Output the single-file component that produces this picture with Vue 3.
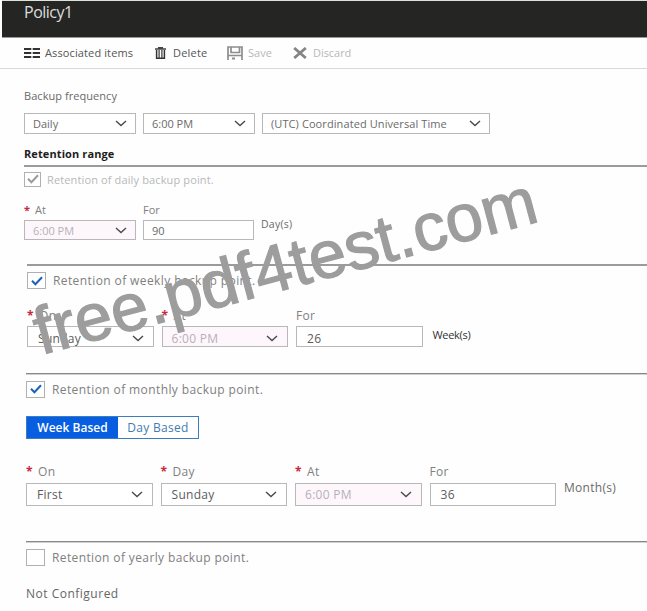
<script setup>
import { h } from 'vue'

const Chevron = () =>
  h('svg', { class: 'chevron', viewBox: '0 0 12 7', width: 12, height: 7 }, [
    h('path', { d: 'M1 1 L6 5.5 L11 1', fill: 'none', stroke: '#4a4a4a', 'stroke-width': 1.4 }),
  ])
const Tick = (props) =>
  h('svg', { viewBox: '0 0 12 10', width: 12, height: 10 }, [
    h('path', { d: 'M1 4.8 L4.4 8.2 L11 1.2', fill: 'none', stroke: props.color, 'stroke-width': 2 }),
  ])
Tick.props = ['color']
</script>

<template>
  <div class="page">
    <header class="title"><span>Policy1</span></header>
    <nav class="toolbar">
      <span class="tool t1">
        <svg width="16" height="10" viewBox="0 0 16 10"><path d="M0 1H7.3M8.7 1H16M0 5H7.3M8.7 5H16M0 9H7.3M8.7 9H16" stroke="#333" stroke-width="1.9" /></svg>
        <span>Associated items</span>
      </span>
      <span class="tool t2">
        <svg width="11" height="12" viewBox="0 0 11 12"><path d="M3.6 1.7V.6H7.4V1.7M0 2H11" fill="none" stroke="#444" stroke-width="1.3" /><path d="M1.6 3V11.3H9.4V3" fill="none" stroke="#333" stroke-width="1.5" /><path d="M4.1 3V11M6.9 3V11" stroke="#444" stroke-width="1.3" /></svg>
        <span>Delete</span>
      </span>
      <span class="tool t3 off">
        <svg width="16" height="14" viewBox="0 0 16 14"><path d="M1 14V1H15V14M4 1V6.5H12.5V1M1 9.5H15" fill="none" stroke="#8d8d8d" stroke-width="1.7" /><path d="M5 11.5H8V13.5H5Z" fill="#8d8d8d" /></svg>
        <span>Save</span>
      </span>
      <span class="tool t4 off">
        <svg width="14" height="12" viewBox="0 0 14 12"><path d="M1.2 1L12.8 11M12.8 1L1.2 11" stroke="#858585" stroke-width="2.8" /></svg>
        <span>Discard</span>
      </span>
    </nav>

    <main>
      <p class="label freq"><span>Backup frequency</span></p>
      <div class="row top">
        <div class="box"><span>Daily</span><Chevron /></div>
        <div class="box"><span>6:00 PM</span><Chevron /></div>
        <div class="box zone"><span>(UTC) Coordinated Universal Time</span><Chevron /></div>
      </div>
      <h2><span>Retention range</span></h2>

      <section class="daily">
        <div class="check"><i><Tick color="#9b9b9b" /></i><span>Retention of daily backup point.</span></div>
        <div class="row">
          <div class="field"><label><b>*</b>At</label><div class="box locked"><span>6:00 PM</span><Chevron /></div></div>
          <div class="field"><label>For</label><div class="box"><span>90</span></div></div>
          <span class="unit">Day(s)</span>
        </div>
      </section>

      <section class="wide weekly">
        <div class="check"><i><Tick color="#1764b5" /></i><span>Retention of weekly backup point.</span></div>
        <div class="row">
          <div class="field"><label><b>*</b>On</label><div class="box"><span>Sunday</span><Chevron /></div></div>
          <div class="field"><label><b>*</b>At</label><div class="box locked"><span>6:00 PM</span><Chevron /></div></div>
          <div class="field"><label>For</label><div class="box"><span>26</span></div></div>
          <span class="unit">Week(s)</span>
        </div>
      </section>

      <section class="wide monthly">
        <div class="check"><i><Tick color="#1764b5" /></i><span>Retention of monthly backup point.</span></div>
        <div class="toggle"><span class="on">Week Based</span><span class="alt">Day Based</span></div>
        <div class="row">
          <div class="field"><label><b>*</b>On</label><div class="box"><span>First</span><Chevron /></div></div>
          <div class="field"><label><b>*</b>Day</label><div class="box"><span>Sunday</span><Chevron /></div></div>
          <div class="field"><label><b>*</b>At</label><div class="box locked"><span>6:00 PM</span><Chevron /></div></div>
          <div class="field"><label>For</label><div class="box"><span>36</span></div></div>
          <span class="unit">Month(s)</span>
        </div>
      </section>

      <section class="wide yearly">
        <div class="check"><i></i><span>Retention of yearly backup point.</span></div>
        <p class="none"><span>Not Configured</span></p>
      </section>
    </main>
    <div class="watermark">free.pdf4test.com</div>
  </div>
</template>

<style>
body { background: #fff; overflow: hidden; }
</style>

<style scoped>
.page { position: relative; width: 647px; height: 611px; overflow: hidden; background: #fefefe; font-family: "Open Sans", "Noto Sans", sans-serif; font-size: 11px; color: #6a6a6a; white-space: nowrap; }
.page :deep(*) { box-sizing: border-box; }
.page :deep(svg) { display: block; flex: none; }
p, h2 { margin: 0; }
.title { height: 38px; margin-left: 2px; padding-left: 22px; background: #252623; border-top: 1px solid #dbe3db; border-bottom: 1px solid #999; color: #ddd; font-size: 16px; line-height: 23px; letter-spacing: -.5px; }
.toolbar { display: flex; align-items: center; height: 31px; padding-left: 24px; border-bottom: 1px solid #d8d8d8; color: #555; }
.tool { display: flex; align-items: center; height: 28px; margin-top: -1px; }
.tool.off { color: #b8b8b8; }
.t1 { width: 131px; gap: 5px; letter-spacing: .12px; }
.t2 { width: 72px; gap: 7px; letter-spacing: .2px; }
.t3 { width: 66px; gap: 5px; }
.t4 { gap: 6px; letter-spacing: -.05px; }
main { display: flex; flex-direction: column; padding-left: 24px; }
.freq { height: 44px; padding-top: 17px; line-height: 20px; letter-spacing: .05px; }
.row { display: flex; align-items: flex-start; gap: 7px; }
.box { display: flex; align-items: center; justify-content: space-between; width: 112px; height: 21px; padding: 0 8px; border: 1px solid #b8b8b8; background: #fff; color: #6a6a6a; }
.zone { width: 228px; letter-spacing: .09px; }
h2 { height: 31px; padding-top: 10px; font-size: 11px; line-height: 20px; color: #1d1d1d; letter-spacing: .1px; }
section { border-top: 2px solid #9b9b9b; }
.check { display: flex; align-items: center; gap: 6px; }
.check i { display: flex; align-items: center; justify-content: center; width: 17px; height: 15px; border: 1px solid #b0b0b0; background: #fff; }
.field { display: flex; flex-direction: column; }
label { display: flex; color: #808080; }
label b { width: 11px; color: #c8283c; font-weight: 700; }
.daily { height: 99px; }
.daily .check { padding-top: 4px; height: 20px; color: #b8b8b8; letter-spacing: .13px; }
.daily .row { padding-top: 13px; }
.daily .box { height: 20px; }
.daily .field:nth-child(2) .box { width: 111px; }
.daily label { height: 20px; line-height: 20px; }
.daily .unit { padding-top: 15px; line-height: 18px; font-size: 10.5px; letter-spacing: .25px; }
.locked, .wide .locked { background: #fdf7fc; color: #b8afb6; }
.wide { margin-left: 2px; letter-spacing: .3px; }
.wide .check { gap: 7px; color: #808080; font-size: 12px; letter-spacing: .4px; }
.wide .check i { width: 19px; height: 17px; }
.wide .box { width: 126.5px; padding: 0 9px 0 10px; font-size: 12px; color: #5c5c5c; }
.wide .box.locked { padding-left: 9px; color: #b8afb6; }
.wide label { font-size: 12px; }
.wide label b { width: 12px; letter-spacing: 0; }
.weekly { height: 109px; margin-left: 3px; }
.weekly .check { height: 29px; }
.weekly .row { padding-top: 11px; gap: 8px; }
.weekly label { height: 20px; line-height: 20px; }
.weekly .box { height: 21px; padding-top: 3px; }
.weekly .unit { padding-top: 20px; margin-left: 2px; line-height: 18px; font-size: 11px; letter-spacing: -.3px; color: #333; }
.monthly, .yearly { border-top: 1px solid #888; box-shadow: inset 0 1px #d0d0d0; }
.monthly { height: 168px; }
.monthly .check { height: 30px; }
.toggle { display: flex; width: 173px; height: 23px; margin-top: 12px; border: 1px solid #3b7ec0; line-height: 21px; font-size: 12px; letter-spacing: 0; text-align: center; background: #fff; color: #3f7cae; }
.toggle .on { width: 91px; background: #075ee0; color: #fff; font-weight: 600; }
.toggle .alt { flex: 1; letter-spacing: .3px; }
.monthly .row { padding-top: 23px; gap: 8px; }
.monthly label { height: 21px; line-height: 20px; }
.monthly .box { height: 23px; }
.monthly .unit { padding-top: 17px; line-height: 18px; font-size: 12px; }
.yearly .check { height: 30px; letter-spacing: .38px; }
.none { padding-top: 12px; line-height: 20px; font-size: 12px; letter-spacing: .5px; color: #666; }
.watermark { position: absolute; left: 41px; top: 302px; font: 67px/60px "Liberation Sans", sans-serif; color: #9d9d9d; -webkit-text-stroke: 1.2px #9d9d9d; transform-origin: 0 53px; transform: rotate(-15deg); }
</style>
